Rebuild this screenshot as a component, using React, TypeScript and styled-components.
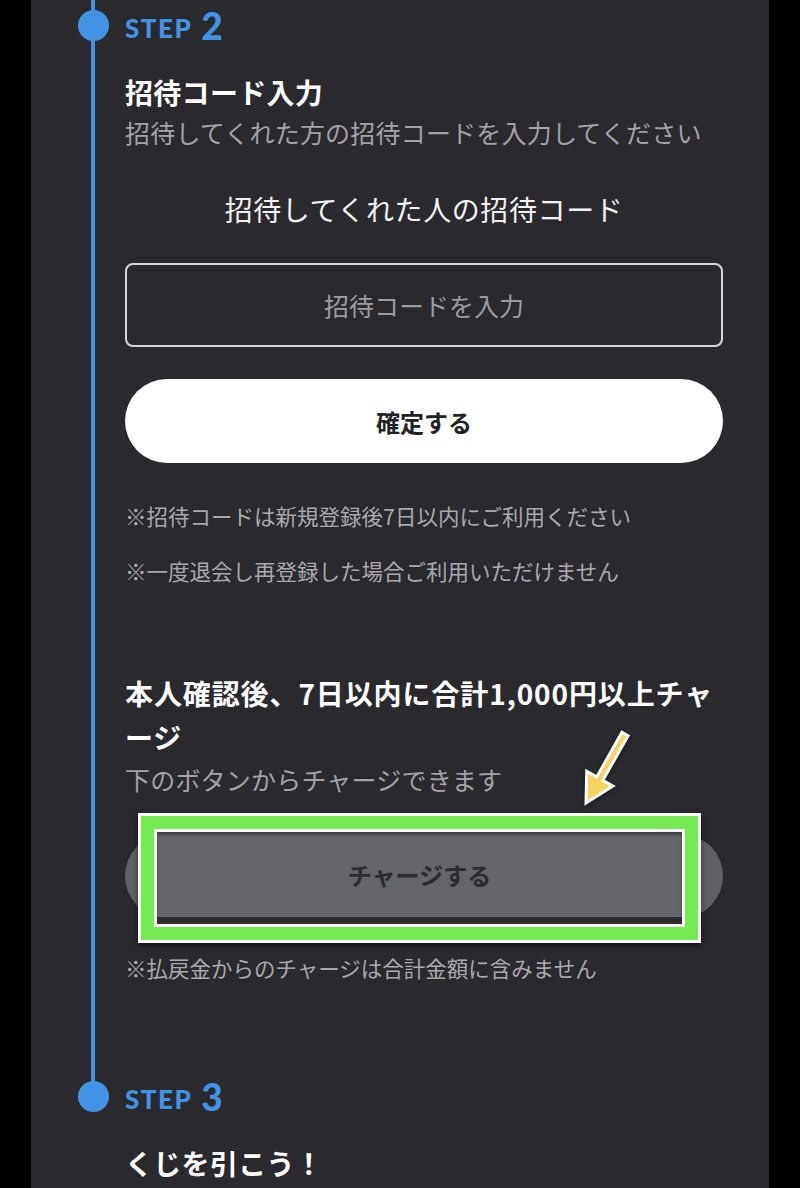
import React from 'react';
import styled, { createGlobalStyle } from 'styled-components';

const GlobalStyle = createGlobalStyle`
  html, body {
    margin: 0;
    padding: 0;
    background: #000;
  }
  body {
    font-family: 'Noto Sans CJK JP', 'Noto Sans', sans-serif;
  }
`;

const colors = {
  panel: '#2a292e',
  blue: '#4393e4',
  white: '#ffffff',
  sub: '#a2a2a7',
  note: '#a9a9ad',
  pill: '#606165',
  green: '#74ea52',
  yellow: '#f4d35e',
};

const Arrow = () => (
  <ArrowSvg width="70" height="87" viewBox="0 0 70 87">
    <polygon
      points="50.95,7.28 25.75,51.88 15.7,46.2 15,78 41.9,61 31.85,55.32 57.05,10.72"
      fill={colors.yellow}
      stroke="#ffffff"
      strokeWidth="3"
      strokeLinejoin="miter"
    />
  </ArrowSvg>
);

const StepHead = ({ num }: { num: number }) => (
  <StepLabel>
    <span>STEP</span>
    <StepNum>{num}</StepNum>
  </StepLabel>
);

const App = (): JSX.Element => (
  <>
    <GlobalStyle />
    <Panel>
      <Step>
        <Rail>
          <RailLine size={10} />
          <Dot />
          <RailLine grow />
        </Rail>
        <Body bottom={85}>
          <StepHead num={2} />
          <Title>招待コード入力</Title>
          <Sub>招待してくれた方の招待コードを入力してください</Sub>
          <CodeLabel>招待してくれた人の招待コード</CodeLabel>
          <CodeInput placeholder="招待コードを入力" />
          <ConfirmButton>確定する</ConfirmButton>
          <Notes>
            <Note>※招待コードは新規登録後7日以内にご利用ください</Note>
            <Note>※一度退会し再登録した場合ご利用いただけません</Note>
          </Notes>
          <Title wrap top={82}>本人確認後、7日以内に合計1,000円以上チャージ</Title>
          <Sub>下のボタンからチャージできます</Sub>
          <ChargeArea>
            <ChargePill />
            <Highlight>
              <HighlightGreen>
                <HighlightInner>
                  <ZoomedButton>チャージする</ZoomedButton>
                </HighlightInner>
              </HighlightGreen>
            </Highlight>
            <Arrow />
          </ChargeArea>
          <Note top={32}>※払戻金からのチャージは合計金額に含みません</Note>
        </Body>
      </Step>
      <Step>
        <Rail>
          <RailLine size={10} />
          <Dot />
        </Rail>
        <Body bottom={5}>
          <StepHead num={3} />
          <Title>くじを引こう！</Title>
        </Body>
      </Step>
    </Panel>
  </>
);

const Panel = styled.div`
  margin-left: 31px;
  width: 738px;
  min-height: 1188px;
  background: ${colors.panel};
  display: flex;
  flex-direction: column;
`;

const Step = styled.section`
  display: flex;
  flex-direction: row;
`;

const Rail = styled.div`
  width: 32px;
  margin-left: 46px;
  margin-right: 16px;
  display: flex;
  flex-direction: column;
  align-items: center;
  flex-shrink: 0;
`;

const RailLine = styled.div<{ size?: number; grow?: boolean }>`
  width: 4px;
  background: ${colors.blue};
  height: ${({ size }) => (size ? `${size}px` : 'auto')};
  ${({ grow }) => grow && 'flex: 1;'}
`;

const Dot = styled.div`
  width: 31px;
  height: 31px;
  border-radius: 50%;
  background: ${colors.blue};
`;

const Body = styled.div<{ bottom: number }>`
  width: 598px;
  padding-top: 10px;
  padding-bottom: ${({ bottom }) => bottom}px;
  display: flex;
  flex-direction: column;
`;

const StepLabel = styled.div`
  height: 31px;
  display: flex;
  align-items: center;
  gap: 9px;
  color: ${colors.blue};
  font-family: Lato, 'Open Sans', sans-serif;
  font-weight: 900;
  font-size: 26px;
  letter-spacing: 1.5px;
  line-height: 1;

  span:first-child {
    padding-top: 4px;
  }
`;

const StepNum = styled.span`
  font-size: 37px;
  letter-spacing: 0;
`;

const Title = styled.h2<{ wrap?: boolean; top?: number }>`
  margin: ${({ top }) => top ?? 31}px 0 0;
  color: ${colors.white};
  font-size: 28px;
  font-weight: 700;
  line-height: ${({ wrap }) => (wrap ? 44 : 40)}px;
  letter-spacing: ${({ wrap }) => (wrap ? 0.9 : 0.3)}px;
  line-break: loose;
`;

const Sub = styled.p`
  margin: 0;
  color: ${colors.sub};
  font-size: 25px;
  line-height: 40px;
  letter-spacing: 0.2px;
`;

const CodeLabel = styled.p`
  margin: 37px 0 0;
  color: #f2f2f2;
  font-size: 28px;
  line-height: 40px;
  letter-spacing: 0.6px;
  text-align: center;
`;

const CodeInput = styled.input`
  margin-top: 34px;
  box-sizing: border-box;
  width: 100%;
  height: 84px;
  border: 2px solid #d6d6d8;
  border-radius: 8px;
  background: transparent;
  color: #fff;
  font-family: inherit;
  font-size: 25px;
  text-align: center;
  outline: none;

  &::placeholder {
    color: #9c9ca0;
  }
`;

const ConfirmButton = styled.button`
  margin-top: 32px;
  height: 84px;
  width: 100%;
  border: none;
  border-radius: 42px;
  background: #fff;
  color: #222226;
  font-family: inherit;
  font-size: 24px;
  font-weight: 700;
`;

const Notes = styled.div`
  margin-top: 35px;
  display: flex;
  flex-direction: column;
  gap: 19px;
`;

const Note = styled.p<{ top?: number }>`
  margin: ${({ top }) => top ?? 0}px 0 0;
  color: ${colors.note};
  font-size: 21.5px;
  line-height: 36px;
`;

const ChargeArea = styled.div`
  position: relative;
  margin-top: 35px;
`;

const ChargePill = styled.div`
  height: 84px;
  border-radius: 42px;
  background: ${colors.pill};
`;

const Highlight = styled.div`
  position: absolute;
  left: 13px;
  top: -21px;
  width: 563px;
  height: 130px;
  box-sizing: border-box;
  padding: 3px;
  background: #fff;
  box-shadow: 0 2px 5px rgba(0, 0, 0, 0.6);
`;

const HighlightGreen = styled.div`
  height: 100%;
  box-sizing: border-box;
  padding: 13px;
  background: ${colors.green};
`;

const HighlightInner = styled.div`
  height: 100%;
  box-sizing: border-box;
  padding: 3px;
  background: #fff;
`;

const ZoomedButton = styled.div`
  height: 100%;
  box-sizing: border-box;
  border-bottom: 7px solid #2d2c31;
  background: #646569;
  box-shadow: inset 0 3px 3px rgba(0, 0, 0, 0.35);
  color: #2b2b30;
  font-size: 24px;
  font-weight: 700;
  display: flex;
  align-items: center;
  justify-content: center;
`;

const ArrowSvg = styled.svg`
  position: absolute;
  left: 446px;
  top: -109px;
  overflow: visible;
  filter: drop-shadow(0 1px 2px rgba(0, 0, 0, 0.5));
`;

export default App;
